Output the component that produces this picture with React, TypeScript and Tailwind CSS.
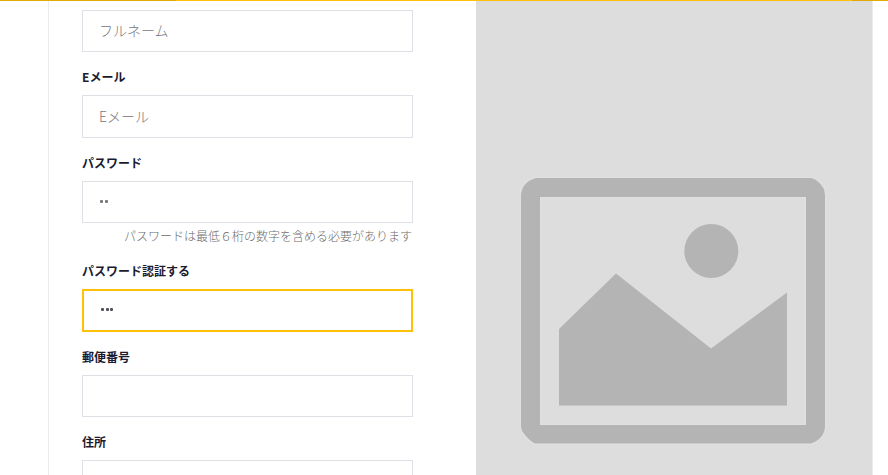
import type { ReactNode } from "react";

function Label({ children }: { children: ReactNode }) {
  return (
    <div className="h-4 text-xs leading-4 font-bold whitespace-nowrap text-[#1b1a2e]">{children}</div>
  );
}

const idle = "border border-[#dfdfe5] px-4 text-[#77777c]";
const focused = "border-2 border-[#ffc107] px-4 text-[#51515a]";

function Field({
  className,
  active = false,
  children,
}: {
  className: string;
  active?: boolean;
  children?: ReactNode;
}) {
  return (
    <div
      className={`flex w-full shrink-0 items-center bg-white pb-0.5 text-sm leading-5 font-light ${active ? focused : idle} ${className}`}
    >
      {children}
    </div>
  );
}

function Dots({ count }: { count: number }) {
  return (
    <div className="ml-px flex gap-[1.5px]">
      {Array.from({ length: count }, (_, i) => (
        <span key={i} className="size-[3px] rounded-[1px] bg-current" />
      ))}
    </div>
  );
}

function Placeholder() {
  return (
    <svg className="block h-[474px] w-[396px]" viewBox="476 1 396 474">
      <path
        fill="#b4b4b4"
        stroke="#e0e0e0"
        strokeWidth="3"
        paintOrder="stroke"
        fillRule="evenodd"
        d="M536 178H811Q818 179 824 189L825 195V427Q824 439 811 443.500H535Q529 441 522 431L521 427V195Q522 182 536 178ZM540 197V425H806V197Z"
      />
      <circle cx="711.3" cy="251" r="27" fill="#b4b4b4" />
      <path fill="#b4b4b4" d="M559 329L616 273.500L711 348.500L787 292.500V405.500H559Z" />
    </svg>
  );
}

export default function App() {
  return (
    <div className="flex h-[475px] w-[888px] flex-col overflow-hidden bg-white font-['Noto_Sans_CJK_JP',sans-serif]">
      <div className="flex h-px shrink-0">
        <div className="w-44 bg-[#e3a90b]" />
        <div className="flex-1 bg-[#ffc107]" />
        <div className="w-9 bg-[#e3a90b]" />
      </div>
      <main className="ml-12 flex h-[474px] w-[825px] border-x border-[#ececee]">
        <form className="mr-[63px] ml-[33px] flex w-[331px] shrink-0 flex-col pt-[9px]">
          <Field className="h-[42px]">フルネーム</Field>
          <div className="pt-[17px] pb-[10px]"><Label>Eメール</Label></div>
          <Field className="h-[43px]">Eメール</Field>
          <div className="pt-[17px] pb-[10px]"><Label>パスワード</Label></div>
          <Field className="h-[42px]"><Dots count={2} /></Field>
          <p className="mt-[5px] h-4 pr-px text-right text-xs leading-4 font-light whitespace-nowrap text-[#6c6c6c]">
            パスワードは最低６桁の数字を含める必要があります
          </p>
          <div className="pt-[19px] pb-[10px]"><Label>パスワード認証する</Label></div>
          <Field className="h-[43px]" active><Dots count={3} /></Field>
          <div className="pt-[17px] pb-[10px]"><Label>郵便番号</Label></div>
          <Field className="h-[42px]" />
          <div className="pt-[17px] pb-[10px]"><Label>住所</Label></div>
          <Field className="h-[42px]" />
        </form>
        <div className="w-[396px] shrink-0 bg-[#dddddd]">
          <Placeholder />
        </div>
      </main>
    </div>
  );
}
